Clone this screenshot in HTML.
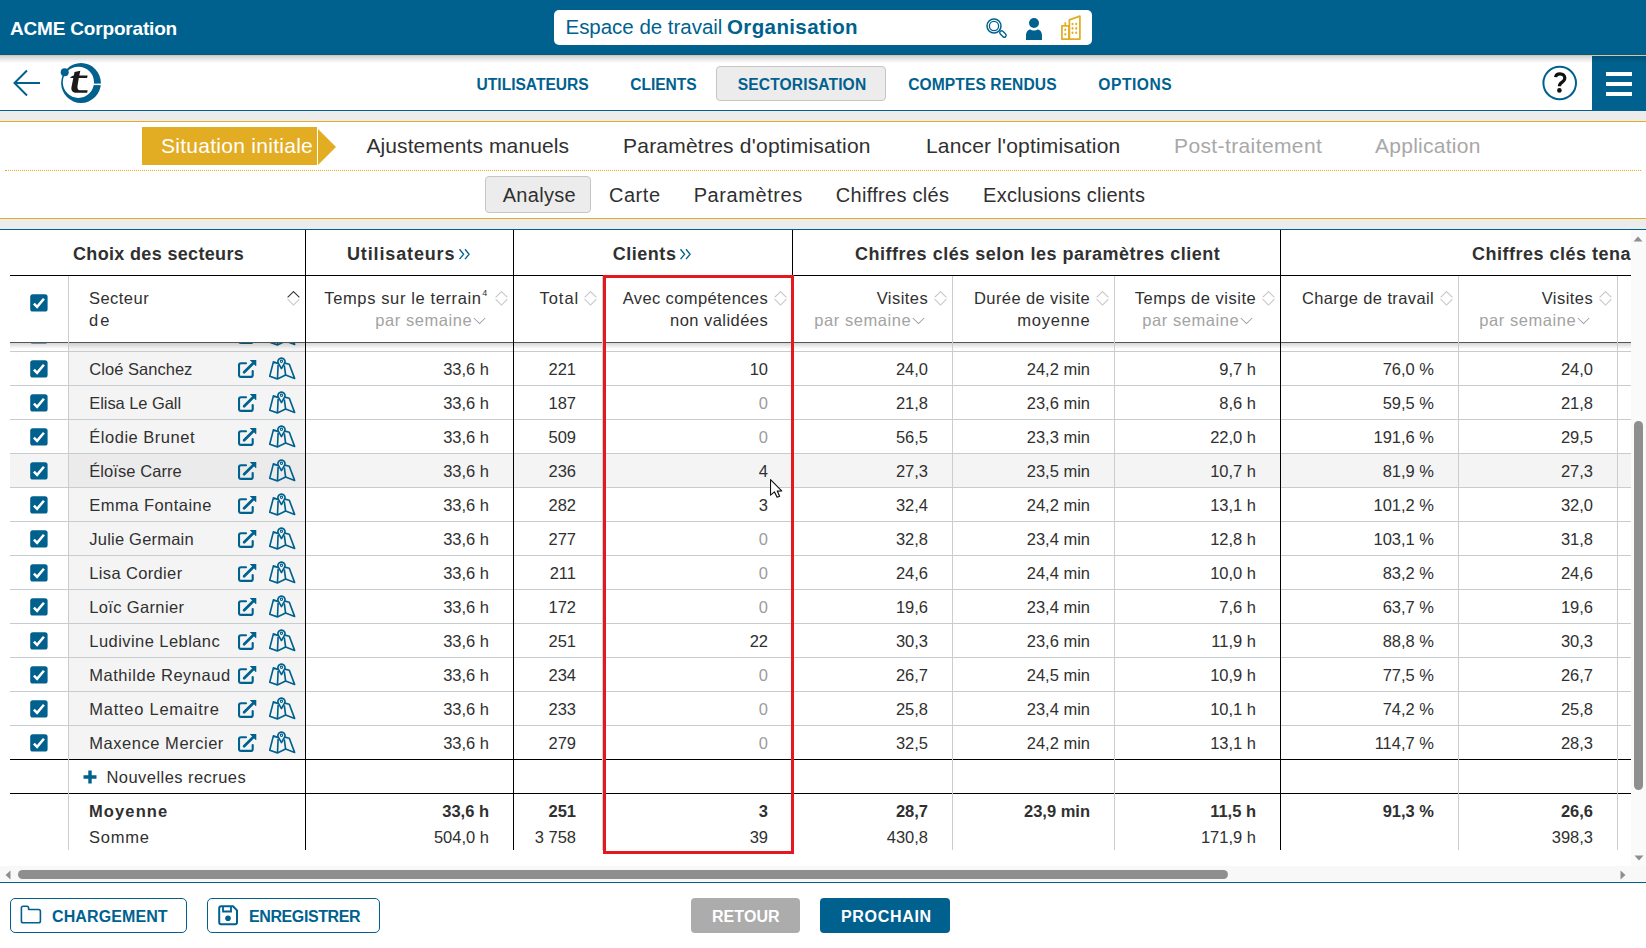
<!DOCTYPE html>
<html><head><meta charset="utf-8"><style>
html,body{margin:0;padding:0;background:#fff;}
body{width:1646px;height:948px;position:relative;overflow:hidden;font-family:"Liberation Sans", sans-serif;}
body>div,body>svg{position:absolute;}
.t{white-space:pre;line-height:1;}
</style></head><body>
<div style="left:0px;top:0px;width:1646px;height:55px;background:#00618f;"></div>
<div style="left:0px;top:54px;width:1646px;height:1px;background:#005a8a;"></div>
<div style="left:0px;top:55px;width:1646px;height:1px;background:#d9c79b;z-index:3;"></div>
<div style="left:0px;top:56px;width:1646px;height:7px;background:linear-gradient(rgba(0,0,0,0.17),rgba(0,0,0,0));z-index:3;"></div>
<div class="t" style="left:10px;top:18.92px;font-size:19px;font-weight:700;color:#fff;letter-spacing:-0.182px;">ACME Corporation</div>
<div style="left:554px;top:10px;width:538px;height:35px;background:#fff;border-radius:5px;"></div>
<div class="t" style="left:565.5px;top:17.15px;font-size:20.5px;font-weight:400;color:#00618f;letter-spacing:-0.026px;">Espace de travail</div>
<div class="t" style="left:727px;top:17.15px;font-size:20.5px;font-weight:700;color:#00618f;letter-spacing:0.383px;">Organisation</div>
<svg style="left:984px;top:16px" width="24" height="24" viewBox="0 0 24 24">
<circle cx="10" cy="10" r="7" fill="none" stroke="#00618f" stroke-width="1.5"/>
<circle cx="10" cy="10" r="4.6" fill="none" stroke="#00618f" stroke-width="1.3"/>
<rect x="15.2" y="16.2" width="7.5" height="3.6" rx="1.8" transform="rotate(45 18.95 18)" fill="none" stroke="#00618f" stroke-width="1.4"/>
</svg>
<svg style="left:1025px;top:17px" width="18" height="24" viewBox="0 0 18 24">
<circle cx="9" cy="6" r="5" fill="#00618f"/>
<path d="M1 23 L1 18.5 C1 14.5 3.5 12.5 5.5 12.5 C7 13.8 11 13.8 12.5 12.5 C14.5 12.5 17 14.5 17 18.5 L17 23 Z" fill="#00618f"/>
</svg>
<svg style="left:1056px;top:12px" width="30" height="30" viewBox="0 0 30 30">
<g fill="none" stroke="#e3ad23" stroke-width="1.75" stroke-linejoin="round">
<path d="M5.9 27 V13.8 H12.9 V27 Z"/><path d="M9.3 13.8 V10.3"/>
<path d="M13.4 27 V7.8 L23.9 4.1 V27 Z"/></g>
<g fill="#e3ad23"><ellipse cx="9.3" cy="17.7" rx="1" ry="1.3"/><ellipse cx="9.3" cy="22.3" rx="1" ry="1.3"/>
<ellipse cx="16.5" cy="12" rx="1" ry="1.3"/><ellipse cx="20.2" cy="12" rx="1" ry="1.3"/>
<ellipse cx="16.5" cy="16.4" rx="1" ry="1.3"/><ellipse cx="20.2" cy="16.4" rx="1" ry="1.3"/>
<ellipse cx="16.5" cy="20.7" rx="1" ry="1.3"/><ellipse cx="20.2" cy="20.7" rx="1" ry="1.3"/></g>
</svg>
<div style="left:0px;top:110px;width:1646px;height:1px;background:#00618f;"></div>
<div style="left:0px;top:111px;width:1646px;height:10px;background:#ececec;"></div>
<svg style="left:10px;top:66px" width="34" height="34" viewBox="0 0 34 34">
<path d="M30 17 H5 M17 4.5 L4.5 17 L17 29.5" fill="none" stroke="#00618f" stroke-width="2"/>
</svg>
<svg style="left:58px;top:60px" width="46" height="46" viewBox="0 0 46 46">
<path fill-rule="evenodd" d="M3.1 23 A19.9 19.9 0 1 0 42.9 23 A19.9 19.9 0 1 0 3.1 23 Z M4.8 22.3 A15.6 15.6 0 1 0 36 22.3 A15.6 15.6 0 1 0 4.8 22.3 Z" fill="#00618f"/>
<rect x="35" y="23.6" width="9" height="1.5" fill="#fff"/>
<circle cx="6.7" cy="12.2" r="4" fill="#00618f"/>
<path d="M16.5 12 L22.3 10.7 L21.3 15.4 L29.6 15.4 L29.1 18 L20.8 18 L19.5 26 C19.2 28.5 19.8 30.3 22 30.3 L29.6 30.3 L29.2 32.8 L19 32.8 C14.5 32.8 12.8 30.5 13.5 27 L15.3 18 L12 18 C13 16.5 14.8 15.6 15.9 15.4 Z" fill="#1a1a1a"/>
</svg>
<div class="t" style="left:476.6px;top:77.39px;font-size:15.6px;font-weight:700;color:#00618f;letter-spacing:-0.017px;">UTILISATEURS</div>
<div class="t" style="left:630.3px;top:77.39px;font-size:15.6px;font-weight:700;color:#00618f;letter-spacing:-0.060px;">CLIENTS</div>
<div style="left:716px;top:66px;width:170px;height:35px;background:#ececec;border:1px solid #c6c6c6;border-radius:4px;box-sizing:border-box;"></div>
<div class="t" style="left:737.7px;top:77.39px;font-size:15.6px;font-weight:700;color:#00618f;letter-spacing:0.139px;">SECTORISATION</div>
<div class="t" style="left:908.2px;top:77.39px;font-size:15.6px;font-weight:700;color:#00618f;letter-spacing:0.082px;">COMPTES RENDUS</div>
<div class="t" style="left:1098.3px;top:77.39px;font-size:15.6px;font-weight:700;color:#00618f;letter-spacing:0.529px;">OPTIONS</div>
<svg style="left:1541px;top:65px" width="38" height="38" viewBox="0 0 38 38">
<circle cx="18.7" cy="18" r="16.3" fill="none" stroke="#00618f" stroke-width="2"/>
<path d="M14.6 12.2 C14.8 9.9 16.6 8.9 19 8.9 C21.9 8.9 23.8 10.6 23.8 13.1 C23.8 15.4 22.3 16.4 20.9 17.3 C19.2 18.4 18.4 19.2 18.4 21.3" fill="none" stroke="#111" stroke-width="3.2" stroke-linecap="butt"/>
<circle cx="18.4" cy="25.4" r="2.3" fill="#111"/>
</svg>
<div style="left:1592px;top:56px;width:54px;height:54px;background:#00618f;"></div>
<div style="left:1606px;top:72px;width:26px;height:3.6px;background:#fff;"></div>
<div style="left:1606px;top:82px;width:26px;height:3.6px;background:#fff;"></div>
<div style="left:1606px;top:92px;width:26px;height:3.6px;background:#fff;"></div>
<div style="left:0px;top:120.5px;width:1646px;height:1.5px;background:#e3ad23;"></div>
<div style="left:142px;top:127px;width:175px;height:38px;background:#e3ad23;"></div>
<svg style="left:318px;top:129px" width="19" height="37" viewBox="0 0 19 37"><path d="M0 0 L18 18 L0 36 Z" fill="#e3ad23"/></svg>
<div class="t" style="left:161px;top:135.22px;font-size:21px;font-weight:400;color:#fff;letter-spacing:0.277px;">Situation initiale</div>
<div class="t" style="left:366.4px;top:134.82px;font-size:21px;font-weight:400;color:#303030;letter-spacing:0.102px;">Ajustements manuels</div>
<div class="t" style="left:623px;top:134.82px;font-size:21px;font-weight:400;color:#303030;letter-spacing:0.224px;">Paramètres d&#x27;optimisation</div>
<div class="t" style="left:926px;top:134.82px;font-size:21px;font-weight:400;color:#303030;letter-spacing:0.171px;">Lancer l&#x27;optimisation</div>
<div class="t" style="left:1174px;top:134.82px;font-size:21px;font-weight:400;color:#a8a8a8;letter-spacing:0.386px;">Post-traitement</div>
<div class="t" style="left:1375px;top:134.82px;font-size:21px;font-weight:400;color:#a8a8a8;letter-spacing:0.267px;">Application</div>
<div style="left:5px;top:170px;width:1636px;height:0;border-top:1px dotted #e3ad23;"></div>
<div style="left:485px;top:176px;width:106px;height:37px;background:#ececec;border:1px solid #c6c6c6;border-radius:4px;box-sizing:border-box;"></div>
<div class="t" style="left:502.7px;top:184.77px;font-size:20px;font-weight:400;color:#303030;letter-spacing:0.307px;">Analyse</div>
<div class="t" style="left:609px;top:184.77px;font-size:20px;font-weight:400;color:#303030;letter-spacing:0.523px;">Carte</div>
<div class="t" style="left:693.7px;top:184.77px;font-size:20px;font-weight:400;color:#303030;letter-spacing:0.581px;">Paramètres</div>
<div class="t" style="left:835.8px;top:184.77px;font-size:20px;font-weight:400;color:#303030;letter-spacing:0.294px;">Chiffres clés</div>
<div class="t" style="left:983.1px;top:184.77px;font-size:20px;font-weight:400;color:#303030;letter-spacing:0.233px;">Exclusions clients</div>
<div style="left:0px;top:217.5px;width:1646px;height:1.5px;background:#e3ad23;"></div>
<div style="left:0px;top:219px;width:1646px;height:10px;background:#ececec;"></div>
<div style="left:0px;top:229px;width:1646px;height:1px;background:#00618f;"></div>
<div style="left:69px;top:343px;width:236px;height:416px;background:#f4f4f4;"></div>
<div style="left:10px;top:454px;width:1621px;height:33px;background:#f4f4f4;"></div>
<div style="left:69px;top:454px;width:236px;height:33px;background:#ebebeb;"></div>
<svg style="left:238px;top:326px" width="19" height="19" viewBox="0 0 19 19">
<path d="M8 3.2 H3 Q1 3.2 1 5.2 V14.9 Q1 16.9 3 16.9 H12.7 Q14.7 16.9 14.7 14.9 V11.1" fill="none" stroke="#00618f" stroke-width="2.15" stroke-linecap="round" stroke-linejoin="round"/>
<path d="M6.1 12.3 L15.2 3.2" fill="none" stroke="#00618f" stroke-width="2.7" stroke-linecap="round"/>
<path d="M12.1 0.1 H18 V5.9 Z" fill="#00618f" stroke="#00618f" stroke-width="0.6" stroke-linejoin="round"/>
</svg>
<svg style="left:269px;top:323px" width="27" height="24" viewBox="0 0 27 24">
<path d="M9.2 6.6 L4.4 4.9 L0.7 19.3 L8.4 21.9 L16.6 18.1 L25.6 21.4 L20.3 7.2 L15.8 6.1" fill="none" stroke="#00618f" stroke-width="1.65" stroke-linejoin="round"/>
<path d="M9.1 8 L8.5 21.8 M15.3 8.4 L16.6 18.1" fill="none" stroke="#00618f" stroke-width="1.65"/>
<path d="M12.45 11.6 L9.5 6.4 A3.45 3.45 0 1 1 15.4 6.4 Z" fill="#f4f4f4" stroke="#00618f" stroke-width="1.65" stroke-linejoin="round"/>
<circle cx="12.45" cy="4.3" r="1.15" fill="none" stroke="#00618f" stroke-width="1.1"/>
</svg>
<svg style="left:30px;top:326px" width="18" height="18" viewBox="0 0 18 18">
<rect x="0.2" y="0.2" width="17.4" height="17.4" rx="2.6" fill="#00618f"/>
<path d="M3.9 9.6 L7.1 12.9 L13.9 4.7" fill="none" stroke="#fff" stroke-width="2.5" stroke-linecap="butt" stroke-linejoin="miter"/>
</svg>
<svg style="left:30px;top:360px" width="18" height="18" viewBox="0 0 18 18">
<rect x="0.2" y="0.2" width="17.4" height="17.4" rx="2.6" fill="#00618f"/>
<path d="M3.9 9.6 L7.1 12.9 L13.9 4.7" fill="none" stroke="#fff" stroke-width="2.5" stroke-linecap="butt" stroke-linejoin="miter"/>
</svg>
<div class="t" style="left:89.3px;top:361.03px;font-size:16.5px;font-weight:400;color:#303030;letter-spacing:0.029px;">Cloé Sanchez</div>
<svg style="left:238px;top:360px" width="19" height="19" viewBox="0 0 19 19">
<path d="M8 3.2 H3 Q1 3.2 1 5.2 V14.9 Q1 16.9 3 16.9 H12.7 Q14.7 16.9 14.7 14.9 V11.1" fill="none" stroke="#00618f" stroke-width="2.15" stroke-linecap="round" stroke-linejoin="round"/>
<path d="M6.1 12.3 L15.2 3.2" fill="none" stroke="#00618f" stroke-width="2.7" stroke-linecap="round"/>
<path d="M12.1 0.1 H18 V5.9 Z" fill="#00618f" stroke="#00618f" stroke-width="0.6" stroke-linejoin="round"/>
</svg>
<svg style="left:269px;top:357px" width="27" height="24" viewBox="0 0 27 24">
<path d="M9.2 6.6 L4.4 4.9 L0.7 19.3 L8.4 21.9 L16.6 18.1 L25.6 21.4 L20.3 7.2 L15.8 6.1" fill="none" stroke="#00618f" stroke-width="1.65" stroke-linejoin="round"/>
<path d="M9.1 8 L8.5 21.8 M15.3 8.4 L16.6 18.1" fill="none" stroke="#00618f" stroke-width="1.65"/>
<path d="M12.45 11.6 L9.5 6.4 A3.45 3.45 0 1 1 15.4 6.4 Z" fill="#f4f4f4" stroke="#00618f" stroke-width="1.65" stroke-linejoin="round"/>
<circle cx="12.45" cy="4.3" r="1.15" fill="none" stroke="#00618f" stroke-width="1.1"/>
</svg>
<div class="t" style="right:1157px;top:361.03px;font-size:16.5px;font-weight:400;color:#303030;">33,6 h</div>
<div class="t" style="right:1070px;top:361.03px;font-size:16.5px;font-weight:400;color:#303030;">221</div>
<div class="t" style="right:878px;top:361.03px;font-size:16.5px;font-weight:400;color:#303030;">10</div>
<div class="t" style="right:718px;top:361.03px;font-size:16.5px;font-weight:400;color:#303030;">24,0</div>
<div class="t" style="right:556px;top:361.03px;font-size:16.5px;font-weight:400;color:#303030;">24,2 min</div>
<div class="t" style="right:390px;top:361.03px;font-size:16.5px;font-weight:400;color:#303030;">9,7 h</div>
<div class="t" style="right:212px;top:361.03px;font-size:16.5px;font-weight:400;color:#303030;">76,0 %</div>
<div class="t" style="right:53px;top:361.03px;font-size:16.5px;font-weight:400;color:#303030;">24,0</div>
<div style="left:10px;top:385px;width:1621px;height:1px;background:#c7cccf;"></div>
<svg style="left:30px;top:394px" width="18" height="18" viewBox="0 0 18 18">
<rect x="0.2" y="0.2" width="17.4" height="17.4" rx="2.6" fill="#00618f"/>
<path d="M3.9 9.6 L7.1 12.9 L13.9 4.7" fill="none" stroke="#fff" stroke-width="2.5" stroke-linecap="butt" stroke-linejoin="miter"/>
</svg>
<div class="t" style="left:89.3px;top:395.03px;font-size:16.5px;font-weight:400;color:#303030;letter-spacing:-0.066px;">Elisa Le Gall</div>
<svg style="left:238px;top:394px" width="19" height="19" viewBox="0 0 19 19">
<path d="M8 3.2 H3 Q1 3.2 1 5.2 V14.9 Q1 16.9 3 16.9 H12.7 Q14.7 16.9 14.7 14.9 V11.1" fill="none" stroke="#00618f" stroke-width="2.15" stroke-linecap="round" stroke-linejoin="round"/>
<path d="M6.1 12.3 L15.2 3.2" fill="none" stroke="#00618f" stroke-width="2.7" stroke-linecap="round"/>
<path d="M12.1 0.1 H18 V5.9 Z" fill="#00618f" stroke="#00618f" stroke-width="0.6" stroke-linejoin="round"/>
</svg>
<svg style="left:269px;top:391px" width="27" height="24" viewBox="0 0 27 24">
<path d="M9.2 6.6 L4.4 4.9 L0.7 19.3 L8.4 21.9 L16.6 18.1 L25.6 21.4 L20.3 7.2 L15.8 6.1" fill="none" stroke="#00618f" stroke-width="1.65" stroke-linejoin="round"/>
<path d="M9.1 8 L8.5 21.8 M15.3 8.4 L16.6 18.1" fill="none" stroke="#00618f" stroke-width="1.65"/>
<path d="M12.45 11.6 L9.5 6.4 A3.45 3.45 0 1 1 15.4 6.4 Z" fill="#f4f4f4" stroke="#00618f" stroke-width="1.65" stroke-linejoin="round"/>
<circle cx="12.45" cy="4.3" r="1.15" fill="none" stroke="#00618f" stroke-width="1.1"/>
</svg>
<div class="t" style="right:1157px;top:395.03px;font-size:16.5px;font-weight:400;color:#303030;">33,6 h</div>
<div class="t" style="right:1070px;top:395.03px;font-size:16.5px;font-weight:400;color:#303030;">187</div>
<div class="t" style="right:878px;top:395.03px;font-size:16.5px;font-weight:400;color:#9c9c9c;">0</div>
<div class="t" style="right:718px;top:395.03px;font-size:16.5px;font-weight:400;color:#303030;">21,8</div>
<div class="t" style="right:556px;top:395.03px;font-size:16.5px;font-weight:400;color:#303030;">23,6 min</div>
<div class="t" style="right:390px;top:395.03px;font-size:16.5px;font-weight:400;color:#303030;">8,6 h</div>
<div class="t" style="right:212px;top:395.03px;font-size:16.5px;font-weight:400;color:#303030;">59,5 %</div>
<div class="t" style="right:53px;top:395.03px;font-size:16.5px;font-weight:400;color:#303030;">21,8</div>
<div style="left:10px;top:419px;width:1621px;height:1px;background:#c7cccf;"></div>
<svg style="left:30px;top:428px" width="18" height="18" viewBox="0 0 18 18">
<rect x="0.2" y="0.2" width="17.4" height="17.4" rx="2.6" fill="#00618f"/>
<path d="M3.9 9.6 L7.1 12.9 L13.9 4.7" fill="none" stroke="#fff" stroke-width="2.5" stroke-linecap="butt" stroke-linejoin="miter"/>
</svg>
<div class="t" style="left:89.3px;top:429.03px;font-size:16.5px;font-weight:400;color:#303030;letter-spacing:0.514px;">Élodie Brunet</div>
<svg style="left:238px;top:428px" width="19" height="19" viewBox="0 0 19 19">
<path d="M8 3.2 H3 Q1 3.2 1 5.2 V14.9 Q1 16.9 3 16.9 H12.7 Q14.7 16.9 14.7 14.9 V11.1" fill="none" stroke="#00618f" stroke-width="2.15" stroke-linecap="round" stroke-linejoin="round"/>
<path d="M6.1 12.3 L15.2 3.2" fill="none" stroke="#00618f" stroke-width="2.7" stroke-linecap="round"/>
<path d="M12.1 0.1 H18 V5.9 Z" fill="#00618f" stroke="#00618f" stroke-width="0.6" stroke-linejoin="round"/>
</svg>
<svg style="left:269px;top:425px" width="27" height="24" viewBox="0 0 27 24">
<path d="M9.2 6.6 L4.4 4.9 L0.7 19.3 L8.4 21.9 L16.6 18.1 L25.6 21.4 L20.3 7.2 L15.8 6.1" fill="none" stroke="#00618f" stroke-width="1.65" stroke-linejoin="round"/>
<path d="M9.1 8 L8.5 21.8 M15.3 8.4 L16.6 18.1" fill="none" stroke="#00618f" stroke-width="1.65"/>
<path d="M12.45 11.6 L9.5 6.4 A3.45 3.45 0 1 1 15.4 6.4 Z" fill="#f4f4f4" stroke="#00618f" stroke-width="1.65" stroke-linejoin="round"/>
<circle cx="12.45" cy="4.3" r="1.15" fill="none" stroke="#00618f" stroke-width="1.1"/>
</svg>
<div class="t" style="right:1157px;top:429.03px;font-size:16.5px;font-weight:400;color:#303030;">33,6 h</div>
<div class="t" style="right:1070px;top:429.03px;font-size:16.5px;font-weight:400;color:#303030;">509</div>
<div class="t" style="right:878px;top:429.03px;font-size:16.5px;font-weight:400;color:#9c9c9c;">0</div>
<div class="t" style="right:718px;top:429.03px;font-size:16.5px;font-weight:400;color:#303030;">56,5</div>
<div class="t" style="right:556px;top:429.03px;font-size:16.5px;font-weight:400;color:#303030;">23,3 min</div>
<div class="t" style="right:390px;top:429.03px;font-size:16.5px;font-weight:400;color:#303030;">22,0 h</div>
<div class="t" style="right:212px;top:429.03px;font-size:16.5px;font-weight:400;color:#303030;">191,6 %</div>
<div class="t" style="right:53px;top:429.03px;font-size:16.5px;font-weight:400;color:#303030;">29,5</div>
<div style="left:10px;top:453px;width:1621px;height:1px;background:#c7cccf;"></div>
<svg style="left:30px;top:462px" width="18" height="18" viewBox="0 0 18 18">
<rect x="0.2" y="0.2" width="17.4" height="17.4" rx="2.6" fill="#00618f"/>
<path d="M3.9 9.6 L7.1 12.9 L13.9 4.7" fill="none" stroke="#fff" stroke-width="2.5" stroke-linecap="butt" stroke-linejoin="miter"/>
</svg>
<div class="t" style="left:89.3px;top:463.03px;font-size:16.5px;font-weight:400;color:#303030;letter-spacing:0.068px;">Éloïse Carre</div>
<svg style="left:238px;top:462px" width="19" height="19" viewBox="0 0 19 19">
<path d="M8 3.2 H3 Q1 3.2 1 5.2 V14.9 Q1 16.9 3 16.9 H12.7 Q14.7 16.9 14.7 14.9 V11.1" fill="none" stroke="#00618f" stroke-width="2.15" stroke-linecap="round" stroke-linejoin="round"/>
<path d="M6.1 12.3 L15.2 3.2" fill="none" stroke="#00618f" stroke-width="2.7" stroke-linecap="round"/>
<path d="M12.1 0.1 H18 V5.9 Z" fill="#00618f" stroke="#00618f" stroke-width="0.6" stroke-linejoin="round"/>
</svg>
<svg style="left:269px;top:459px" width="27" height="24" viewBox="0 0 27 24">
<path d="M9.2 6.6 L4.4 4.9 L0.7 19.3 L8.4 21.9 L16.6 18.1 L25.6 21.4 L20.3 7.2 L15.8 6.1" fill="none" stroke="#00618f" stroke-width="1.65" stroke-linejoin="round"/>
<path d="M9.1 8 L8.5 21.8 M15.3 8.4 L16.6 18.1" fill="none" stroke="#00618f" stroke-width="1.65"/>
<path d="M12.45 11.6 L9.5 6.4 A3.45 3.45 0 1 1 15.4 6.4 Z" fill="#f4f4f4" stroke="#00618f" stroke-width="1.65" stroke-linejoin="round"/>
<circle cx="12.45" cy="4.3" r="1.15" fill="none" stroke="#00618f" stroke-width="1.1"/>
</svg>
<div class="t" style="right:1157px;top:463.03px;font-size:16.5px;font-weight:400;color:#303030;">33,6 h</div>
<div class="t" style="right:1070px;top:463.03px;font-size:16.5px;font-weight:400;color:#303030;">236</div>
<div class="t" style="right:878px;top:463.03px;font-size:16.5px;font-weight:400;color:#303030;">4</div>
<div class="t" style="right:718px;top:463.03px;font-size:16.5px;font-weight:400;color:#303030;">27,3</div>
<div class="t" style="right:556px;top:463.03px;font-size:16.5px;font-weight:400;color:#303030;">23,5 min</div>
<div class="t" style="right:390px;top:463.03px;font-size:16.5px;font-weight:400;color:#303030;">10,7 h</div>
<div class="t" style="right:212px;top:463.03px;font-size:16.5px;font-weight:400;color:#303030;">81,9 %</div>
<div class="t" style="right:53px;top:463.03px;font-size:16.5px;font-weight:400;color:#303030;">27,3</div>
<div style="left:10px;top:487px;width:1621px;height:1px;background:#c7cccf;"></div>
<svg style="left:30px;top:496px" width="18" height="18" viewBox="0 0 18 18">
<rect x="0.2" y="0.2" width="17.4" height="17.4" rx="2.6" fill="#00618f"/>
<path d="M3.9 9.6 L7.1 12.9 L13.9 4.7" fill="none" stroke="#fff" stroke-width="2.5" stroke-linecap="butt" stroke-linejoin="miter"/>
</svg>
<div class="t" style="left:89.3px;top:497.03px;font-size:16.5px;font-weight:400;color:#303030;letter-spacing:0.465px;">Emma Fontaine</div>
<svg style="left:238px;top:496px" width="19" height="19" viewBox="0 0 19 19">
<path d="M8 3.2 H3 Q1 3.2 1 5.2 V14.9 Q1 16.9 3 16.9 H12.7 Q14.7 16.9 14.7 14.9 V11.1" fill="none" stroke="#00618f" stroke-width="2.15" stroke-linecap="round" stroke-linejoin="round"/>
<path d="M6.1 12.3 L15.2 3.2" fill="none" stroke="#00618f" stroke-width="2.7" stroke-linecap="round"/>
<path d="M12.1 0.1 H18 V5.9 Z" fill="#00618f" stroke="#00618f" stroke-width="0.6" stroke-linejoin="round"/>
</svg>
<svg style="left:269px;top:493px" width="27" height="24" viewBox="0 0 27 24">
<path d="M9.2 6.6 L4.4 4.9 L0.7 19.3 L8.4 21.9 L16.6 18.1 L25.6 21.4 L20.3 7.2 L15.8 6.1" fill="none" stroke="#00618f" stroke-width="1.65" stroke-linejoin="round"/>
<path d="M9.1 8 L8.5 21.8 M15.3 8.4 L16.6 18.1" fill="none" stroke="#00618f" stroke-width="1.65"/>
<path d="M12.45 11.6 L9.5 6.4 A3.45 3.45 0 1 1 15.4 6.4 Z" fill="#f4f4f4" stroke="#00618f" stroke-width="1.65" stroke-linejoin="round"/>
<circle cx="12.45" cy="4.3" r="1.15" fill="none" stroke="#00618f" stroke-width="1.1"/>
</svg>
<div class="t" style="right:1157px;top:497.03px;font-size:16.5px;font-weight:400;color:#303030;">33,6 h</div>
<div class="t" style="right:1070px;top:497.03px;font-size:16.5px;font-weight:400;color:#303030;">282</div>
<div class="t" style="right:878px;top:497.03px;font-size:16.5px;font-weight:400;color:#303030;">3</div>
<div class="t" style="right:718px;top:497.03px;font-size:16.5px;font-weight:400;color:#303030;">32,4</div>
<div class="t" style="right:556px;top:497.03px;font-size:16.5px;font-weight:400;color:#303030;">24,2 min</div>
<div class="t" style="right:390px;top:497.03px;font-size:16.5px;font-weight:400;color:#303030;">13,1 h</div>
<div class="t" style="right:212px;top:497.03px;font-size:16.5px;font-weight:400;color:#303030;">101,2 %</div>
<div class="t" style="right:53px;top:497.03px;font-size:16.5px;font-weight:400;color:#303030;">32,0</div>
<div style="left:10px;top:521px;width:1621px;height:1px;background:#c7cccf;"></div>
<svg style="left:30px;top:530px" width="18" height="18" viewBox="0 0 18 18">
<rect x="0.2" y="0.2" width="17.4" height="17.4" rx="2.6" fill="#00618f"/>
<path d="M3.9 9.6 L7.1 12.9 L13.9 4.7" fill="none" stroke="#fff" stroke-width="2.5" stroke-linecap="butt" stroke-linejoin="miter"/>
</svg>
<div class="t" style="left:89.3px;top:531.03px;font-size:16.5px;font-weight:400;color:#303030;letter-spacing:0.213px;">Julie Germain</div>
<svg style="left:238px;top:530px" width="19" height="19" viewBox="0 0 19 19">
<path d="M8 3.2 H3 Q1 3.2 1 5.2 V14.9 Q1 16.9 3 16.9 H12.7 Q14.7 16.9 14.7 14.9 V11.1" fill="none" stroke="#00618f" stroke-width="2.15" stroke-linecap="round" stroke-linejoin="round"/>
<path d="M6.1 12.3 L15.2 3.2" fill="none" stroke="#00618f" stroke-width="2.7" stroke-linecap="round"/>
<path d="M12.1 0.1 H18 V5.9 Z" fill="#00618f" stroke="#00618f" stroke-width="0.6" stroke-linejoin="round"/>
</svg>
<svg style="left:269px;top:527px" width="27" height="24" viewBox="0 0 27 24">
<path d="M9.2 6.6 L4.4 4.9 L0.7 19.3 L8.4 21.9 L16.6 18.1 L25.6 21.4 L20.3 7.2 L15.8 6.1" fill="none" stroke="#00618f" stroke-width="1.65" stroke-linejoin="round"/>
<path d="M9.1 8 L8.5 21.8 M15.3 8.4 L16.6 18.1" fill="none" stroke="#00618f" stroke-width="1.65"/>
<path d="M12.45 11.6 L9.5 6.4 A3.45 3.45 0 1 1 15.4 6.4 Z" fill="#f4f4f4" stroke="#00618f" stroke-width="1.65" stroke-linejoin="round"/>
<circle cx="12.45" cy="4.3" r="1.15" fill="none" stroke="#00618f" stroke-width="1.1"/>
</svg>
<div class="t" style="right:1157px;top:531.03px;font-size:16.5px;font-weight:400;color:#303030;">33,6 h</div>
<div class="t" style="right:1070px;top:531.03px;font-size:16.5px;font-weight:400;color:#303030;">277</div>
<div class="t" style="right:878px;top:531.03px;font-size:16.5px;font-weight:400;color:#9c9c9c;">0</div>
<div class="t" style="right:718px;top:531.03px;font-size:16.5px;font-weight:400;color:#303030;">32,8</div>
<div class="t" style="right:556px;top:531.03px;font-size:16.5px;font-weight:400;color:#303030;">23,4 min</div>
<div class="t" style="right:390px;top:531.03px;font-size:16.5px;font-weight:400;color:#303030;">12,8 h</div>
<div class="t" style="right:212px;top:531.03px;font-size:16.5px;font-weight:400;color:#303030;">103,1 %</div>
<div class="t" style="right:53px;top:531.03px;font-size:16.5px;font-weight:400;color:#303030;">31,8</div>
<div style="left:10px;top:555px;width:1621px;height:1px;background:#c7cccf;"></div>
<svg style="left:30px;top:564px" width="18" height="18" viewBox="0 0 18 18">
<rect x="0.2" y="0.2" width="17.4" height="17.4" rx="2.6" fill="#00618f"/>
<path d="M3.9 9.6 L7.1 12.9 L13.9 4.7" fill="none" stroke="#fff" stroke-width="2.5" stroke-linecap="butt" stroke-linejoin="miter"/>
</svg>
<div class="t" style="left:89.3px;top:565.03px;font-size:16.5px;font-weight:400;color:#303030;letter-spacing:0.353px;">Lisa Cordier</div>
<svg style="left:238px;top:564px" width="19" height="19" viewBox="0 0 19 19">
<path d="M8 3.2 H3 Q1 3.2 1 5.2 V14.9 Q1 16.9 3 16.9 H12.7 Q14.7 16.9 14.7 14.9 V11.1" fill="none" stroke="#00618f" stroke-width="2.15" stroke-linecap="round" stroke-linejoin="round"/>
<path d="M6.1 12.3 L15.2 3.2" fill="none" stroke="#00618f" stroke-width="2.7" stroke-linecap="round"/>
<path d="M12.1 0.1 H18 V5.9 Z" fill="#00618f" stroke="#00618f" stroke-width="0.6" stroke-linejoin="round"/>
</svg>
<svg style="left:269px;top:561px" width="27" height="24" viewBox="0 0 27 24">
<path d="M9.2 6.6 L4.4 4.9 L0.7 19.3 L8.4 21.9 L16.6 18.1 L25.6 21.4 L20.3 7.2 L15.8 6.1" fill="none" stroke="#00618f" stroke-width="1.65" stroke-linejoin="round"/>
<path d="M9.1 8 L8.5 21.8 M15.3 8.4 L16.6 18.1" fill="none" stroke="#00618f" stroke-width="1.65"/>
<path d="M12.45 11.6 L9.5 6.4 A3.45 3.45 0 1 1 15.4 6.4 Z" fill="#f4f4f4" stroke="#00618f" stroke-width="1.65" stroke-linejoin="round"/>
<circle cx="12.45" cy="4.3" r="1.15" fill="none" stroke="#00618f" stroke-width="1.1"/>
</svg>
<div class="t" style="right:1157px;top:565.03px;font-size:16.5px;font-weight:400;color:#303030;">33,6 h</div>
<div class="t" style="right:1070px;top:565.03px;font-size:16.5px;font-weight:400;color:#303030;">211</div>
<div class="t" style="right:878px;top:565.03px;font-size:16.5px;font-weight:400;color:#9c9c9c;">0</div>
<div class="t" style="right:718px;top:565.03px;font-size:16.5px;font-weight:400;color:#303030;">24,6</div>
<div class="t" style="right:556px;top:565.03px;font-size:16.5px;font-weight:400;color:#303030;">24,4 min</div>
<div class="t" style="right:390px;top:565.03px;font-size:16.5px;font-weight:400;color:#303030;">10,0 h</div>
<div class="t" style="right:212px;top:565.03px;font-size:16.5px;font-weight:400;color:#303030;">83,2 %</div>
<div class="t" style="right:53px;top:565.03px;font-size:16.5px;font-weight:400;color:#303030;">24,6</div>
<div style="left:10px;top:589px;width:1621px;height:1px;background:#c7cccf;"></div>
<svg style="left:30px;top:598px" width="18" height="18" viewBox="0 0 18 18">
<rect x="0.2" y="0.2" width="17.4" height="17.4" rx="2.6" fill="#00618f"/>
<path d="M3.9 9.6 L7.1 12.9 L13.9 4.7" fill="none" stroke="#fff" stroke-width="2.5" stroke-linecap="butt" stroke-linejoin="miter"/>
</svg>
<div class="t" style="left:89.3px;top:599.03px;font-size:16.5px;font-weight:400;color:#303030;letter-spacing:0.350px;">Loïc Garnier</div>
<svg style="left:238px;top:598px" width="19" height="19" viewBox="0 0 19 19">
<path d="M8 3.2 H3 Q1 3.2 1 5.2 V14.9 Q1 16.9 3 16.9 H12.7 Q14.7 16.9 14.7 14.9 V11.1" fill="none" stroke="#00618f" stroke-width="2.15" stroke-linecap="round" stroke-linejoin="round"/>
<path d="M6.1 12.3 L15.2 3.2" fill="none" stroke="#00618f" stroke-width="2.7" stroke-linecap="round"/>
<path d="M12.1 0.1 H18 V5.9 Z" fill="#00618f" stroke="#00618f" stroke-width="0.6" stroke-linejoin="round"/>
</svg>
<svg style="left:269px;top:595px" width="27" height="24" viewBox="0 0 27 24">
<path d="M9.2 6.6 L4.4 4.9 L0.7 19.3 L8.4 21.9 L16.6 18.1 L25.6 21.4 L20.3 7.2 L15.8 6.1" fill="none" stroke="#00618f" stroke-width="1.65" stroke-linejoin="round"/>
<path d="M9.1 8 L8.5 21.8 M15.3 8.4 L16.6 18.1" fill="none" stroke="#00618f" stroke-width="1.65"/>
<path d="M12.45 11.6 L9.5 6.4 A3.45 3.45 0 1 1 15.4 6.4 Z" fill="#f4f4f4" stroke="#00618f" stroke-width="1.65" stroke-linejoin="round"/>
<circle cx="12.45" cy="4.3" r="1.15" fill="none" stroke="#00618f" stroke-width="1.1"/>
</svg>
<div class="t" style="right:1157px;top:599.03px;font-size:16.5px;font-weight:400;color:#303030;">33,6 h</div>
<div class="t" style="right:1070px;top:599.03px;font-size:16.5px;font-weight:400;color:#303030;">172</div>
<div class="t" style="right:878px;top:599.03px;font-size:16.5px;font-weight:400;color:#9c9c9c;">0</div>
<div class="t" style="right:718px;top:599.03px;font-size:16.5px;font-weight:400;color:#303030;">19,6</div>
<div class="t" style="right:556px;top:599.03px;font-size:16.5px;font-weight:400;color:#303030;">23,4 min</div>
<div class="t" style="right:390px;top:599.03px;font-size:16.5px;font-weight:400;color:#303030;">7,6 h</div>
<div class="t" style="right:212px;top:599.03px;font-size:16.5px;font-weight:400;color:#303030;">63,7 %</div>
<div class="t" style="right:53px;top:599.03px;font-size:16.5px;font-weight:400;color:#303030;">19,6</div>
<div style="left:10px;top:623px;width:1621px;height:1px;background:#c7cccf;"></div>
<svg style="left:30px;top:632px" width="18" height="18" viewBox="0 0 18 18">
<rect x="0.2" y="0.2" width="17.4" height="17.4" rx="2.6" fill="#00618f"/>
<path d="M3.9 9.6 L7.1 12.9 L13.9 4.7" fill="none" stroke="#fff" stroke-width="2.5" stroke-linecap="butt" stroke-linejoin="miter"/>
</svg>
<div class="t" style="left:89.3px;top:633.03px;font-size:16.5px;font-weight:400;color:#303030;letter-spacing:0.439px;">Ludivine Leblanc</div>
<svg style="left:238px;top:632px" width="19" height="19" viewBox="0 0 19 19">
<path d="M8 3.2 H3 Q1 3.2 1 5.2 V14.9 Q1 16.9 3 16.9 H12.7 Q14.7 16.9 14.7 14.9 V11.1" fill="none" stroke="#00618f" stroke-width="2.15" stroke-linecap="round" stroke-linejoin="round"/>
<path d="M6.1 12.3 L15.2 3.2" fill="none" stroke="#00618f" stroke-width="2.7" stroke-linecap="round"/>
<path d="M12.1 0.1 H18 V5.9 Z" fill="#00618f" stroke="#00618f" stroke-width="0.6" stroke-linejoin="round"/>
</svg>
<svg style="left:269px;top:629px" width="27" height="24" viewBox="0 0 27 24">
<path d="M9.2 6.6 L4.4 4.9 L0.7 19.3 L8.4 21.9 L16.6 18.1 L25.6 21.4 L20.3 7.2 L15.8 6.1" fill="none" stroke="#00618f" stroke-width="1.65" stroke-linejoin="round"/>
<path d="M9.1 8 L8.5 21.8 M15.3 8.4 L16.6 18.1" fill="none" stroke="#00618f" stroke-width="1.65"/>
<path d="M12.45 11.6 L9.5 6.4 A3.45 3.45 0 1 1 15.4 6.4 Z" fill="#f4f4f4" stroke="#00618f" stroke-width="1.65" stroke-linejoin="round"/>
<circle cx="12.45" cy="4.3" r="1.15" fill="none" stroke="#00618f" stroke-width="1.1"/>
</svg>
<div class="t" style="right:1157px;top:633.03px;font-size:16.5px;font-weight:400;color:#303030;">33,6 h</div>
<div class="t" style="right:1070px;top:633.03px;font-size:16.5px;font-weight:400;color:#303030;">251</div>
<div class="t" style="right:878px;top:633.03px;font-size:16.5px;font-weight:400;color:#303030;">22</div>
<div class="t" style="right:718px;top:633.03px;font-size:16.5px;font-weight:400;color:#303030;">30,3</div>
<div class="t" style="right:556px;top:633.03px;font-size:16.5px;font-weight:400;color:#303030;">23,6 min</div>
<div class="t" style="right:390px;top:633.03px;font-size:16.5px;font-weight:400;color:#303030;">11,9 h</div>
<div class="t" style="right:212px;top:633.03px;font-size:16.5px;font-weight:400;color:#303030;">88,8 %</div>
<div class="t" style="right:53px;top:633.03px;font-size:16.5px;font-weight:400;color:#303030;">30,3</div>
<div style="left:10px;top:657px;width:1621px;height:1px;background:#c7cccf;"></div>
<svg style="left:30px;top:666px" width="18" height="18" viewBox="0 0 18 18">
<rect x="0.2" y="0.2" width="17.4" height="17.4" rx="2.6" fill="#00618f"/>
<path d="M3.9 9.6 L7.1 12.9 L13.9 4.7" fill="none" stroke="#fff" stroke-width="2.5" stroke-linecap="butt" stroke-linejoin="miter"/>
</svg>
<div class="t" style="left:89.3px;top:667.03px;font-size:16.5px;font-weight:400;color:#303030;letter-spacing:0.523px;">Mathilde Reynaud</div>
<svg style="left:238px;top:666px" width="19" height="19" viewBox="0 0 19 19">
<path d="M8 3.2 H3 Q1 3.2 1 5.2 V14.9 Q1 16.9 3 16.9 H12.7 Q14.7 16.9 14.7 14.9 V11.1" fill="none" stroke="#00618f" stroke-width="2.15" stroke-linecap="round" stroke-linejoin="round"/>
<path d="M6.1 12.3 L15.2 3.2" fill="none" stroke="#00618f" stroke-width="2.7" stroke-linecap="round"/>
<path d="M12.1 0.1 H18 V5.9 Z" fill="#00618f" stroke="#00618f" stroke-width="0.6" stroke-linejoin="round"/>
</svg>
<svg style="left:269px;top:663px" width="27" height="24" viewBox="0 0 27 24">
<path d="M9.2 6.6 L4.4 4.9 L0.7 19.3 L8.4 21.9 L16.6 18.1 L25.6 21.4 L20.3 7.2 L15.8 6.1" fill="none" stroke="#00618f" stroke-width="1.65" stroke-linejoin="round"/>
<path d="M9.1 8 L8.5 21.8 M15.3 8.4 L16.6 18.1" fill="none" stroke="#00618f" stroke-width="1.65"/>
<path d="M12.45 11.6 L9.5 6.4 A3.45 3.45 0 1 1 15.4 6.4 Z" fill="#f4f4f4" stroke="#00618f" stroke-width="1.65" stroke-linejoin="round"/>
<circle cx="12.45" cy="4.3" r="1.15" fill="none" stroke="#00618f" stroke-width="1.1"/>
</svg>
<div class="t" style="right:1157px;top:667.03px;font-size:16.5px;font-weight:400;color:#303030;">33,6 h</div>
<div class="t" style="right:1070px;top:667.03px;font-size:16.5px;font-weight:400;color:#303030;">234</div>
<div class="t" style="right:878px;top:667.03px;font-size:16.5px;font-weight:400;color:#9c9c9c;">0</div>
<div class="t" style="right:718px;top:667.03px;font-size:16.5px;font-weight:400;color:#303030;">26,7</div>
<div class="t" style="right:556px;top:667.03px;font-size:16.5px;font-weight:400;color:#303030;">24,5 min</div>
<div class="t" style="right:390px;top:667.03px;font-size:16.5px;font-weight:400;color:#303030;">10,9 h</div>
<div class="t" style="right:212px;top:667.03px;font-size:16.5px;font-weight:400;color:#303030;">77,5 %</div>
<div class="t" style="right:53px;top:667.03px;font-size:16.5px;font-weight:400;color:#303030;">26,7</div>
<div style="left:10px;top:691px;width:1621px;height:1px;background:#c7cccf;"></div>
<svg style="left:30px;top:700px" width="18" height="18" viewBox="0 0 18 18">
<rect x="0.2" y="0.2" width="17.4" height="17.4" rx="2.6" fill="#00618f"/>
<path d="M3.9 9.6 L7.1 12.9 L13.9 4.7" fill="none" stroke="#fff" stroke-width="2.5" stroke-linecap="butt" stroke-linejoin="miter"/>
</svg>
<div class="t" style="left:89.3px;top:701.03px;font-size:16.5px;font-weight:400;color:#303030;letter-spacing:0.744px;">Matteo Lemaitre</div>
<svg style="left:238px;top:700px" width="19" height="19" viewBox="0 0 19 19">
<path d="M8 3.2 H3 Q1 3.2 1 5.2 V14.9 Q1 16.9 3 16.9 H12.7 Q14.7 16.9 14.7 14.9 V11.1" fill="none" stroke="#00618f" stroke-width="2.15" stroke-linecap="round" stroke-linejoin="round"/>
<path d="M6.1 12.3 L15.2 3.2" fill="none" stroke="#00618f" stroke-width="2.7" stroke-linecap="round"/>
<path d="M12.1 0.1 H18 V5.9 Z" fill="#00618f" stroke="#00618f" stroke-width="0.6" stroke-linejoin="round"/>
</svg>
<svg style="left:269px;top:697px" width="27" height="24" viewBox="0 0 27 24">
<path d="M9.2 6.6 L4.4 4.9 L0.7 19.3 L8.4 21.9 L16.6 18.1 L25.6 21.4 L20.3 7.2 L15.8 6.1" fill="none" stroke="#00618f" stroke-width="1.65" stroke-linejoin="round"/>
<path d="M9.1 8 L8.5 21.8 M15.3 8.4 L16.6 18.1" fill="none" stroke="#00618f" stroke-width="1.65"/>
<path d="M12.45 11.6 L9.5 6.4 A3.45 3.45 0 1 1 15.4 6.4 Z" fill="#f4f4f4" stroke="#00618f" stroke-width="1.65" stroke-linejoin="round"/>
<circle cx="12.45" cy="4.3" r="1.15" fill="none" stroke="#00618f" stroke-width="1.1"/>
</svg>
<div class="t" style="right:1157px;top:701.03px;font-size:16.5px;font-weight:400;color:#303030;">33,6 h</div>
<div class="t" style="right:1070px;top:701.03px;font-size:16.5px;font-weight:400;color:#303030;">233</div>
<div class="t" style="right:878px;top:701.03px;font-size:16.5px;font-weight:400;color:#9c9c9c;">0</div>
<div class="t" style="right:718px;top:701.03px;font-size:16.5px;font-weight:400;color:#303030;">25,8</div>
<div class="t" style="right:556px;top:701.03px;font-size:16.5px;font-weight:400;color:#303030;">23,4 min</div>
<div class="t" style="right:390px;top:701.03px;font-size:16.5px;font-weight:400;color:#303030;">10,1 h</div>
<div class="t" style="right:212px;top:701.03px;font-size:16.5px;font-weight:400;color:#303030;">74,2 %</div>
<div class="t" style="right:53px;top:701.03px;font-size:16.5px;font-weight:400;color:#303030;">25,8</div>
<div style="left:10px;top:725px;width:1621px;height:1px;background:#c7cccf;"></div>
<svg style="left:30px;top:734px" width="18" height="18" viewBox="0 0 18 18">
<rect x="0.2" y="0.2" width="17.4" height="17.4" rx="2.6" fill="#00618f"/>
<path d="M3.9 9.6 L7.1 12.9 L13.9 4.7" fill="none" stroke="#fff" stroke-width="2.5" stroke-linecap="butt" stroke-linejoin="miter"/>
</svg>
<div class="t" style="left:89.3px;top:735.03px;font-size:16.5px;font-weight:400;color:#303030;letter-spacing:0.536px;">Maxence Mercier</div>
<svg style="left:238px;top:734px" width="19" height="19" viewBox="0 0 19 19">
<path d="M8 3.2 H3 Q1 3.2 1 5.2 V14.9 Q1 16.9 3 16.9 H12.7 Q14.7 16.9 14.7 14.9 V11.1" fill="none" stroke="#00618f" stroke-width="2.15" stroke-linecap="round" stroke-linejoin="round"/>
<path d="M6.1 12.3 L15.2 3.2" fill="none" stroke="#00618f" stroke-width="2.7" stroke-linecap="round"/>
<path d="M12.1 0.1 H18 V5.9 Z" fill="#00618f" stroke="#00618f" stroke-width="0.6" stroke-linejoin="round"/>
</svg>
<svg style="left:269px;top:731px" width="27" height="24" viewBox="0 0 27 24">
<path d="M9.2 6.6 L4.4 4.9 L0.7 19.3 L8.4 21.9 L16.6 18.1 L25.6 21.4 L20.3 7.2 L15.8 6.1" fill="none" stroke="#00618f" stroke-width="1.65" stroke-linejoin="round"/>
<path d="M9.1 8 L8.5 21.8 M15.3 8.4 L16.6 18.1" fill="none" stroke="#00618f" stroke-width="1.65"/>
<path d="M12.45 11.6 L9.5 6.4 A3.45 3.45 0 1 1 15.4 6.4 Z" fill="#f4f4f4" stroke="#00618f" stroke-width="1.65" stroke-linejoin="round"/>
<circle cx="12.45" cy="4.3" r="1.15" fill="none" stroke="#00618f" stroke-width="1.1"/>
</svg>
<div class="t" style="right:1157px;top:735.03px;font-size:16.5px;font-weight:400;color:#303030;">33,6 h</div>
<div class="t" style="right:1070px;top:735.03px;font-size:16.5px;font-weight:400;color:#303030;">279</div>
<div class="t" style="right:878px;top:735.03px;font-size:16.5px;font-weight:400;color:#9c9c9c;">0</div>
<div class="t" style="right:718px;top:735.03px;font-size:16.5px;font-weight:400;color:#303030;">32,5</div>
<div class="t" style="right:556px;top:735.03px;font-size:16.5px;font-weight:400;color:#303030;">24,2 min</div>
<div class="t" style="right:390px;top:735.03px;font-size:16.5px;font-weight:400;color:#303030;">13,1 h</div>
<div class="t" style="right:212px;top:735.03px;font-size:16.5px;font-weight:400;color:#303030;">114,7 %</div>
<div class="t" style="right:53px;top:735.03px;font-size:16.5px;font-weight:400;color:#303030;">28,3</div>
<div style="left:10px;top:230px;width:1621px;height:112px;background:#fff;"></div>
<div style="left:10px;top:342px;width:1621px;height:1px;background:#555;"></div>
<div style="left:10px;top:343px;width:1621px;height:6px;background:linear-gradient(rgba(0,0,0,0.16),rgba(0,0,0,0));"></div>
<div style="left:10px;top:351px;width:1621px;height:1px;background:#c7cccf;"></div>
<div style="left:10px;top:275px;width:1621px;height:1px;background:#000;"></div>
<div class="t" style="left:73px;top:244.76px;font-size:18px;font-weight:700;color:#303030;letter-spacing:0.337px;">Choix des secteurs</div>
<div class="t" style="left:347px;top:244.76px;font-size:18px;font-weight:700;color:#303030;letter-spacing:0.859px;">Utilisateurs</div>
<div class="t" style="left:612.8px;top:244.76px;font-size:18px;font-weight:700;color:#303030;letter-spacing:0.514px;">Clients</div>
<div class="t" style="left:855px;top:244.76px;font-size:18px;font-weight:700;color:#303030;letter-spacing:0.516px;">Chiffres clés selon les paramètres client</div>
<div style="left:1472px;top:244.76px;width:159px;height:22px;overflow:hidden;"><div class="t" style="position:absolute;left:0;top:0;font-size:18px;font-weight:700;color:#303030;letter-spacing:0.504px">Chiffres clés tenant compte</div></div>
<svg style="left:457px;top:247px" width="14" height="14" viewBox="0 0 14 14">
<path d="M2.5 2.3 L6.6 7.2 L2.5 12.1 M8 2.3 L12.1 7.2 L8 12.1" fill="none" stroke="#00618f" stroke-width="1.35"/>
</svg>
<svg style="left:678px;top:247px" width="14" height="14" viewBox="0 0 14 14">
<path d="M2.5 2.3 L6.6 7.2 L2.5 12.1 M8 2.3 L12.1 7.2 L8 12.1" fill="none" stroke="#00618f" stroke-width="1.35"/>
</svg>
<div style="left:10px;top:759px;width:1621px;height:1px;background:#000;"></div>
<div style="left:10px;top:793px;width:1621px;height:1px;background:#000;"></div>
<div style="left:305px;top:230px;width:1px;height:620px;background:#000;"></div>
<div style="left:513px;top:230px;width:1px;height:620px;background:#000;"></div>
<div style="left:792px;top:230px;width:1px;height:620px;background:#000;"></div>
<div style="left:1280px;top:230px;width:1px;height:620px;background:#000;"></div>
<div style="left:68px;top:276px;width:1px;height:574px;background:#c9cdd0;"></div>
<div style="left:602px;top:276px;width:1px;height:574px;background:#c9cdd0;"></div>
<div style="left:952px;top:276px;width:1px;height:574px;background:#c9cdd0;"></div>
<div style="left:1114px;top:276px;width:1px;height:574px;background:#c9cdd0;"></div>
<div style="left:1458px;top:276px;width:1px;height:574px;background:#c9cdd0;"></div>
<div style="left:1617px;top:276px;width:1px;height:574px;background:#c9cdd0;"></div>
<svg style="left:30px;top:294px" width="18" height="18" viewBox="0 0 18 18">
<rect x="0.2" y="0.2" width="17.4" height="17.4" rx="2.6" fill="#00618f"/>
<path d="M3.9 9.6 L7.1 12.9 L13.9 4.7" fill="none" stroke="#fff" stroke-width="2.5" stroke-linecap="butt" stroke-linejoin="miter"/>
</svg>
<div class="t" style="left:89px;top:290.03px;font-size:16.5px;font-weight:400;color:#303030;letter-spacing:0.462px;">Secteur</div>
<div class="t" style="left:89px;top:312.03px;font-size:16.5px;font-weight:400;color:#303030;letter-spacing:2.191px;">de</div>
<svg style="left:287px;top:291px" width="13" height="15" viewBox="0 0 13 15">
<path d="M0.6 6.3 L6.5 0.6 L12.4 6.3" fill="none" stroke="#303030" stroke-width="1.05"/>
<path d="M0.6 8.2 L6.5 14 L12.4 8.2" fill="none" stroke="#c6c6c6" stroke-width="1.05"/>
</svg>
<div class="t" style="right:1165.0px;top:290.03px;font-size:16.5px;font-weight:400;color:#303030;letter-spacing:0.619px;margin-right:-0.619px;">Temps sur le terrain</div>
<div class="t" style="right:1158.8px;top:289.38px;font-size:9px;font-weight:400;color:#303030;">4</div>
<svg style="left:494.5px;top:290.5px" width="13" height="15" viewBox="0 0 13 15">
<path d="M0.6 6.3 L6.5 0.6 L12.4 6.3" fill="none" stroke="#c6c6c6" stroke-width="1.05"/>
<path d="M0.6 8.2 L6.5 14 L12.4 8.2" fill="none" stroke="#c6c6c6" stroke-width="1.05"/>
</svg>
<div class="t" style="right:1174.2px;top:312.03px;font-size:16.5px;font-weight:400;color:#a3a3a3;letter-spacing:0.584px;margin-right:-0.584px;">par semaine</div>
<svg style="left:473px;top:317px" width="13" height="8" viewBox="0 0 13 8">
<path d="M0.8 1 L6.5 6.6 L12.2 1" fill="none" stroke="#a0a0a0" stroke-width="1.05"/>
</svg>
<div class="t" style="right:1067.8px;top:290.03px;font-size:16.5px;font-weight:400;color:#303030;letter-spacing:0.948px;margin-right:-0.948px;">Total</div>
<svg style="left:584.0px;top:290.5px" width="13" height="15" viewBox="0 0 13 15">
<path d="M0.6 6.3 L6.5 0.6 L12.4 6.3" fill="none" stroke="#c6c6c6" stroke-width="1.05"/>
<path d="M0.6 8.2 L6.5 14 L12.4 8.2" fill="none" stroke="#c6c6c6" stroke-width="1.05"/>
</svg>
<div class="t" style="right:878.3px;top:290.03px;font-size:16.5px;font-weight:400;color:#303030;letter-spacing:0.396px;margin-right:-0.396px;">Avec compétences</div>
<svg style="left:773.5px;top:290.5px" width="13" height="15" viewBox="0 0 13 15">
<path d="M0.6 6.3 L6.5 0.6 L12.4 6.3" fill="none" stroke="#c6c6c6" stroke-width="1.05"/>
<path d="M0.6 8.2 L6.5 14 L12.4 8.2" fill="none" stroke="#c6c6c6" stroke-width="1.05"/>
</svg>
<div class="t" style="right:878.3px;top:312.03px;font-size:16.5px;font-weight:400;color:#303030;letter-spacing:0.454px;margin-right:-0.454px;">non validées</div>
<div class="t" style="right:718.3px;top:290.03px;font-size:16.5px;font-weight:400;color:#303030;letter-spacing:0.456px;margin-right:-0.456px;">Visites</div>
<svg style="left:933.5px;top:290.5px" width="13" height="15" viewBox="0 0 13 15">
<path d="M0.6 6.3 L6.5 0.6 L12.4 6.3" fill="none" stroke="#c6c6c6" stroke-width="1.05"/>
<path d="M0.6 8.2 L6.5 14 L12.4 8.2" fill="none" stroke="#c6c6c6" stroke-width="1.05"/>
</svg>
<div class="t" style="right:735.2px;top:312.03px;font-size:16.5px;font-weight:400;color:#a3a3a3;letter-spacing:0.584px;margin-right:-0.584px;">par semaine</div>
<svg style="left:912px;top:317px" width="13" height="8" viewBox="0 0 13 8">
<path d="M0.8 1 L6.5 6.6 L12.2 1" fill="none" stroke="#a0a0a0" stroke-width="1.05"/>
</svg>
<div class="t" style="right:556.3px;top:290.03px;font-size:16.5px;font-weight:400;color:#303030;letter-spacing:0.399px;margin-right:-0.399px;">Durée de visite</div>
<svg style="left:1095.5px;top:290.5px" width="13" height="15" viewBox="0 0 13 15">
<path d="M0.6 6.3 L6.5 0.6 L12.4 6.3" fill="none" stroke="#c6c6c6" stroke-width="1.05"/>
<path d="M0.6 8.2 L6.5 14 L12.4 8.2" fill="none" stroke="#c6c6c6" stroke-width="1.05"/>
</svg>
<div class="t" style="right:556.3px;top:312.03px;font-size:16.5px;font-weight:400;color:#303030;letter-spacing:0.760px;margin-right:-0.760px;">moyenne</div>
<div class="t" style="right:390.29999999999995px;top:290.03px;font-size:16.5px;font-weight:400;color:#303030;letter-spacing:0.517px;margin-right:-0.517px;">Temps de visite</div>
<svg style="left:1261.5px;top:290.5px" width="13" height="15" viewBox="0 0 13 15">
<path d="M0.6 6.3 L6.5 0.6 L12.4 6.3" fill="none" stroke="#c6c6c6" stroke-width="1.05"/>
<path d="M0.6 8.2 L6.5 14 L12.4 8.2" fill="none" stroke="#c6c6c6" stroke-width="1.05"/>
</svg>
<div class="t" style="right:407.20000000000005px;top:312.03px;font-size:16.5px;font-weight:400;color:#a3a3a3;letter-spacing:0.584px;margin-right:-0.584px;">par semaine</div>
<svg style="left:1240px;top:317px" width="13" height="8" viewBox="0 0 13 8">
<path d="M0.8 1 L6.5 6.6 L12.2 1" fill="none" stroke="#a0a0a0" stroke-width="1.05"/>
</svg>
<div class="t" style="right:212.29999999999995px;top:290.03px;font-size:16.5px;font-weight:400;color:#303030;letter-spacing:0.381px;margin-right:-0.381px;">Charge de travail</div>
<svg style="left:1439.5px;top:290.5px" width="13" height="15" viewBox="0 0 13 15">
<path d="M0.6 6.3 L6.5 0.6 L12.4 6.3" fill="none" stroke="#c6c6c6" stroke-width="1.05"/>
<path d="M0.6 8.2 L6.5 14 L12.4 8.2" fill="none" stroke="#c6c6c6" stroke-width="1.05"/>
</svg>
<div class="t" style="right:53.299999999999955px;top:290.03px;font-size:16.5px;font-weight:400;color:#303030;letter-spacing:0.456px;margin-right:-0.456px;">Visites</div>
<svg style="left:1598.5px;top:290.5px" width="13" height="15" viewBox="0 0 13 15">
<path d="M0.6 6.3 L6.5 0.6 L12.4 6.3" fill="none" stroke="#c6c6c6" stroke-width="1.05"/>
<path d="M0.6 8.2 L6.5 14 L12.4 8.2" fill="none" stroke="#c6c6c6" stroke-width="1.05"/>
</svg>
<div class="t" style="right:70.20000000000005px;top:312.03px;font-size:16.5px;font-weight:400;color:#a3a3a3;letter-spacing:0.584px;margin-right:-0.584px;">par semaine</div>
<svg style="left:1577px;top:317px" width="13" height="8" viewBox="0 0 13 8">
<path d="M0.8 1 L6.5 6.6 L12.2 1" fill="none" stroke="#a0a0a0" stroke-width="1.05"/>
</svg>
<svg style="left:82px;top:769px" width="16" height="16" viewBox="0 0 16 16">
<path d="M8 1.5 V14.5 M1.5 8 H14.5" stroke="#00618f" stroke-width="3.4"/>
</svg>
<div class="t" style="left:106.5px;top:769.03px;font-size:16.5px;font-weight:400;color:#303030;letter-spacing:0.443px;">Nouvelles recrues</div>
<div class="t" style="left:89px;top:803.03px;font-size:16.5px;font-weight:700;color:#303030;letter-spacing:1.122px;">Moyenne</div>
<div class="t" style="left:89px;top:829.03px;font-size:16.5px;font-weight:400;color:#303030;letter-spacing:0.773px;">Somme</div>
<div class="t" style="right:1157px;top:803.03px;font-size:16.5px;font-weight:700;color:#303030;">33,6 h</div>
<div class="t" style="right:1157px;top:829.03px;font-size:16.5px;font-weight:400;color:#303030;">504,0 h</div>
<div class="t" style="right:1070px;top:803.03px;font-size:16.5px;font-weight:700;color:#303030;">251</div>
<div class="t" style="right:1070px;top:829.03px;font-size:16.5px;font-weight:400;color:#303030;">3 758</div>
<div class="t" style="right:878px;top:803.03px;font-size:16.5px;font-weight:700;color:#303030;">3</div>
<div class="t" style="right:878px;top:829.03px;font-size:16.5px;font-weight:400;color:#303030;">39</div>
<div class="t" style="right:718px;top:803.03px;font-size:16.5px;font-weight:700;color:#303030;">28,7</div>
<div class="t" style="right:718px;top:829.03px;font-size:16.5px;font-weight:400;color:#303030;">430,8</div>
<div class="t" style="right:556px;top:803.03px;font-size:16.5px;font-weight:700;color:#303030;">23,9 min</div>
<div class="t" style="right:390px;top:803.03px;font-size:16.5px;font-weight:700;color:#303030;">11,5 h</div>
<div class="t" style="right:390px;top:829.03px;font-size:16.5px;font-weight:400;color:#303030;">171,9 h</div>
<div class="t" style="right:212px;top:803.03px;font-size:16.5px;font-weight:700;color:#303030;">91,3 %</div>
<div class="t" style="right:53px;top:803.03px;font-size:16.5px;font-weight:700;color:#303030;">26,6</div>
<div class="t" style="right:53px;top:829.03px;font-size:16.5px;font-weight:400;color:#303030;">398,3</div>
<div style="left:603px;top:275px;width:191px;height:579px;border:3px solid #e5171f;box-sizing:border-box;z-index:5"></div>
<svg style="left:770px;top:478px;z-index:6" width="14" height="22" viewBox="0 0 14 22">
<path d="M0.5 1.6 V17.1 L4.5 13.9 L7.1 19.2 L9.6 18.2 L7.3 13.1 L11.7 12.9 Z" fill="#fff" stroke="#111" stroke-width="1.15" stroke-linejoin="round"/>
</svg>
<div style="left:1631px;top:230px;width:15px;height:636px;background:#fafafa;"></div>
<div style="left:0px;top:866px;width:1646px;height:16px;background:#f8f8f8;"></div>
<div style="left:1634px;top:421px;width:9px;height:369px;background:#8e8e8e;border-radius:5px;"></div>
<svg style="left:1632px;top:234px" width="12" height="9" viewBox="0 0 12 9"><path d="M1.5 7.5 L6 2.5 L10.5 7.5 Z" fill="#8e8e8e"/></svg>
<svg style="left:1632.5px;top:854px" width="12" height="9" viewBox="0 0 12 9"><path d="M1.5 1.5 L6 6.5 L10.5 1.5 Z" fill="#8e8e8e"/></svg>
<div style="left:18px;top:870px;width:1210px;height:9px;background:#8e8e8e;border-radius:5px;"></div>
<svg style="left:3px;top:869px" width="9" height="12" viewBox="0 0 9 12"><path d="M7.5 1.5 L2.5 6 L7.5 10.5 Z" fill="#8e8e8e"/></svg>
<svg style="left:1619px;top:869px" width="9" height="12" viewBox="0 0 9 12"><path d="M1.5 1.5 L6.5 6 L1.5 10.5 Z" fill="#8e8e8e"/></svg>
<div style="left:0px;top:882px;width:1646px;height:1px;background:#00618f;"></div>
<div style="left:10px;top:898px;width:177px;height:35px;border:1.5px solid #00618f;border-radius:5px;box-sizing:border-box;"></div>
<svg style="left:19px;top:904px" width="24" height="21" viewBox="0 0 24 21">
<path d="M2.4 4 Q2.4 2.2 4.2 2.2 H8 Q9.6 2.2 9.6 3.8 V5.5 H19.6 Q21.4 5.5 21.4 7.3 V17 Q21.4 18.8 19.6 18.8 H4.2 Q2.4 18.8 2.4 17 Z" fill="none" stroke="#00618f" stroke-width="1.6" stroke-linejoin="round"/>
</svg>
<div class="t" style="left:52px;top:909.46px;font-size:16px;font-weight:700;color:#00618f;letter-spacing:0.103px;">CHARGEMENT</div>
<div style="left:207px;top:898px;width:173px;height:35px;border:1.5px solid #00618f;border-radius:5px;box-sizing:border-box;"></div>
<svg style="left:217px;top:904px" width="22" height="23" viewBox="0 0 22 23">
<path d="M4.2 2.2 H16 L20 6.4 V18.2 Q20 20.2 18 20.2 H4.2 Q2.2 20.2 2.2 18.2 V4.2 Q2.2 2.2 4.2 2.2 Z" fill="none" stroke="#00618f" stroke-width="2" stroke-linejoin="round"/>
<path d="M6 2.5 V7.5 H14 V2.5" fill="none" stroke="#00618f" stroke-width="1.8"/>
<circle cx="11" cy="14.2" r="2.8" fill="#00618f"/>
</svg>
<div class="t" style="left:249px;top:909.46px;font-size:16px;font-weight:700;color:#00618f;letter-spacing:-0.398px;">ENREGISTRER</div>
<div style="left:691px;top:898px;width:109px;height:35px;background:#acacac;border-radius:4px;"></div>
<div class="t" style="left:712px;top:909.46px;font-size:16px;font-weight:700;color:#fff;letter-spacing:0.067px;">RETOUR</div>
<div style="left:820px;top:898px;width:130px;height:35px;background:#00618f;border-radius:4px;"></div>
<div class="t" style="left:841px;top:909.46px;font-size:16px;font-weight:700;color:#fff;letter-spacing:0.679px;">PROCHAIN</div>
</body></html>
